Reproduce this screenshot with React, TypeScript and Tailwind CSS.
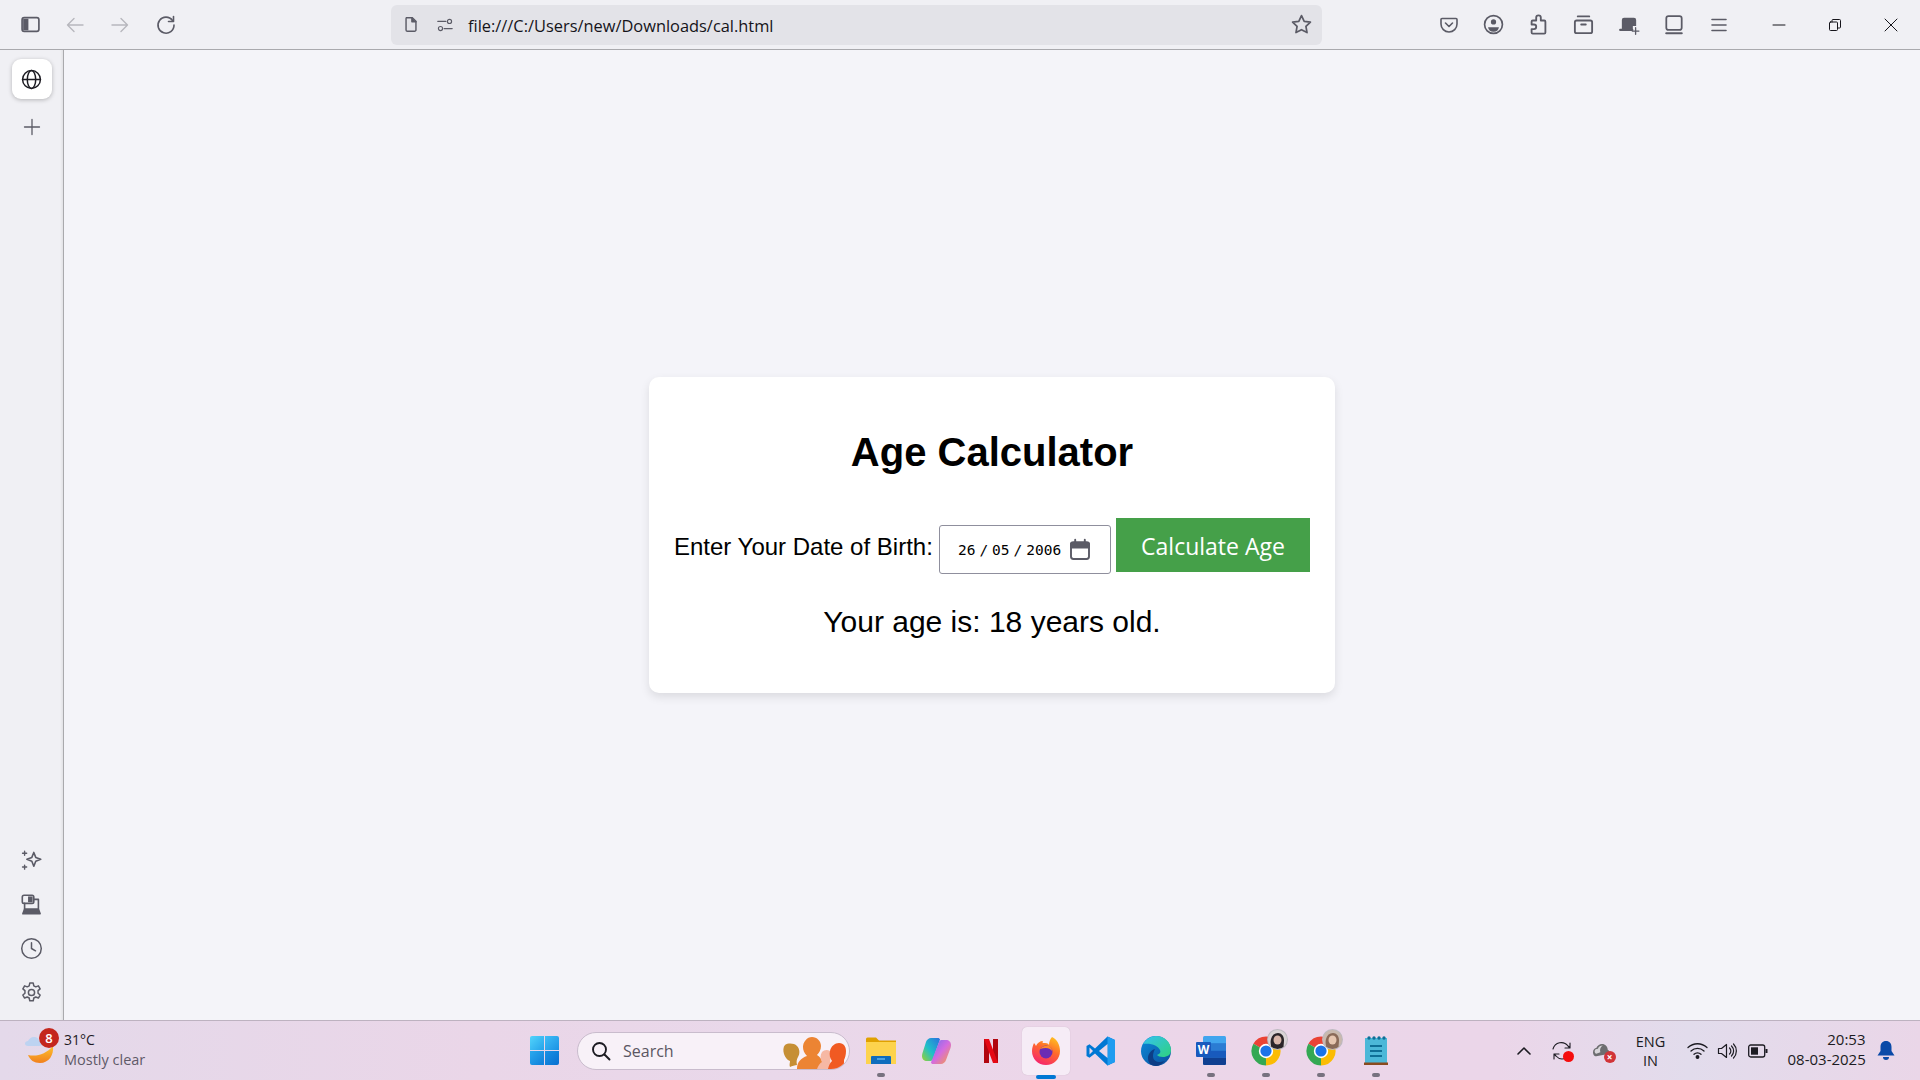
import type { ReactNode } from 'react';

const ink = '#5b5b66';

function Glyph({ size = 20, color = ink, width = 1.6, box = '0 0 20 20', children }: { size?: number; color?: string; width?: number; box?: string; children: ReactNode }) {
  return (
    <svg width={size} height={size} viewBox={box} fill="none" stroke={color} strokeWidth={width} strokeLinecap="round" strokeLinejoin="round">
      {children}
    </svg>
  );
}

function ToolCell({ children }: { children: ReactNode }) {
  return <div className="w-[45px] h-full flex items-center justify-center shrink-0">{children}</div>;
}

function Toolbar() {
  return (
    <div className="h-[50px] shrink-0 flex items-center pl-[8px] bg-[#f0f0f4] border-b border-[#a9a9ad]">
      {/* nav buttons */}
      <ToolCell>
        <Glyph size={21}>
          <rect x="2" y="3.500" width="16" height="13" rx="2" />
          <rect x="3" y="4.500" width="5" height="11" fill={ink} stroke="none" />
        </Glyph>
      </ToolCell>
      <ToolCell>
        <Glyph color="#b7b7bd" width={1.4} box="1 0 20 20">
          <path d="M18 10H2.500M9 3.500 2.500 10 9 16.500" />
        </Glyph>
      </ToolCell>
      <ToolCell>
        <Glyph color="#b7b7bd" width={1.4} box="1 0 20 20">
          <path d="M2 10h15.500M11 3.500l6.500 6.500-6.500 6.500" />
        </Glyph>
      </ToolCell>
      <ToolCell>
        <Glyph>
          <path d="M16.500 5.500A8 8 0 1 0 18 10" />
          <path d="M17.500 1.500v5h-5" />
        </Glyph>
      </ToolCell>

      {/* url bar */}
      <div className="ml-[203px] w-[931px] h-[40px] shrink-0 rounded-[6px] bg-[#e3e3e8] flex items-center">
        <div className="ml-[11px] w-[18px] flex justify-center">
          <Glyph size={21}>
            <path d="M5 2.500h6.500L15.500 6.500v9.500a1.500 1.500 0 0 1-1.500 1.500H6A1.500 1.500 0 0 1 4.500 16V3.500a1 1 0 0 1 .5-1z" />
            <path d="M11 2.500V7h4.500" fill={ink} />
          </Glyph>
        </div>
        <div className="ml-[16px] w-[18px] flex justify-center">
          <Glyph size={20} width={1.3}>
            <path d="M2 6h9M9 14h9" />
            <circle cx="15" cy="6" r="2.300" />
            <circle cx="5" cy="14" r="2.300" />
          </Glyph>
        </div>
        <span className="ml-[14px] mt-[4px] text-[16.400px] text-[#15141a] font-['Open_Sans','Noto_Sans',sans-serif] whitespace-nowrap">file:///C:/Users/new/Downloads/cal.html</span>
        <div className="ml-auto mr-[9px]">
          <Glyph size={23} width={1.5}>
            <path d="m10 2.300 2.350 4.900 5.400.75-3.900 3.750.95 5.350L10 14.500l-4.800 2.550.95-5.350-3.900-3.750 5.400-.75z" />
          </Glyph>
        </div>
      </div>

      {/* extension icons */}
      <div className="ml-[104px] flex h-full">
        <ToolCell>
          <Glyph size={20}>
            <path d="M3 3.500h14a1 1 0 0 1 1 1V9c0 4.500-3.500 8-8 8s-8-3.500-8-8V4.500a1 1 0 0 1 1-1z" />
            <path d="m6.500 8 3.500 3.500L13.500 8" />
          </Glyph>
        </ToolCell>
        <ToolCell>
          <Glyph size={21}>
            <circle cx="10" cy="10" r="8.500" />
            <circle cx="10" cy="7.500" r="2.500" fill={ink} stroke="none" />
            <path d="M4.800 12.500h10.400A5.500 5.500 0 0 1 10 17a5.500 5.500 0 0 1-5.200-4.500z" fill={ink} stroke="none" />
          </Glyph>
        </ToolCell>
        <ToolCell>
          <Glyph size={23}>
            <path d="M10 2a2 2 0 0 1 2 2v2.500h3a1 1 0 0 1 1 1V17a1 1 0 0 1-1 1H5a1 1 0 0 1-1-1v-3h2a2 2 0 0 0 0-4H4V7.500a1 1 0 0 1 1-1h3V4a2 2 0 0 1 2-2z" />
          </Glyph>
        </ToolCell>
        <ToolCell>
          <Glyph size={23}>
            <rect x="2.500" y="6.500" width="15" height="11" rx="1.500" />
            <path d="M5 3h10M8 10h4" />
          </Glyph>
        </ToolCell>
        <ToolCell>
          <Glyph size={22} width={1.2}>
            <path d="M3.500 15V5.500a2 2 0 0 1 2-2h9a2 2 0 0 1 2 2V11h-3v3H2.500z" fill={ink} stroke="none" />
            <path d="M2 14.500h11" stroke={ink} strokeWidth={2} />
            <path d="M16 12.500v6M13 15.500h6" />
          </Glyph>
        </ToolCell>
        <ToolCell>
          <Glyph size={22}>
            <rect x="3" y="2" width="14" height="12.500" rx="2" />
            <path d="M3 17.500h14" strokeWidth={2} />
          </Glyph>
        </ToolCell>
        <ToolCell>
          <Glyph size={20}>
            <path d="M3 4.500h14M3 10h14M3 15.500h14" />
          </Glyph>
        </ToolCell>
      </div>

      {/* window controls */}
      <div className="ml-[10px] flex h-full">
        <div className="w-[56px] flex items-center justify-center">
          <Glyph size={14} color="#15141a" width={1} box="0 0 14 14">
            <path d="M1 7h12" />
          </Glyph>
        </div>
        <div className="w-[56px] flex items-center justify-center">
          <Glyph size={14} color="#15141a" width={1} box="0 0 14 14">
            <rect x="1.500" y="4" width="8" height="8.500" rx="1" />
            <path d="M4 4V2.500a1 1 0 0 1 1-1h6.500a1 1 0 0 1 1 1V9a1 1 0 0 1-1 1H9.500" />
          </Glyph>
        </div>
        <div className="w-[56px] flex items-center justify-center">
          <Glyph size={14} color="#15141a" width={1} box="0 0 14 14">
            <path d="M1 1l12 12M13 1 1 13" />
          </Glyph>
        </div>
      </div>
    </div>
  );
}

function Sidebar() {
  return (
    <div className="w-[64px] shrink-0 flex flex-col items-center bg-[#f0f0f4] border-r border-[#a9a9ad] shadow-[inset_-3px_0_3px_-2px_rgba(0,0,0,0.08)]">
      <div className="mt-[9px] w-[40px] h-[40px] rounded-[9px] bg-white shadow-[0_1px_4px_rgba(0,0,0,0.25)] flex items-center justify-center">
        <Glyph size={21} color="#1c1b22" width={1.4}>
          <circle cx="10" cy="10" r="8.500" />
          <ellipse cx="10" cy="10" rx="4" ry="8.500" />
          <path d="M1.500 10h17" />
        </Glyph>
      </div>
      <div className="mt-[18px] h-[20px] flex items-center">
        <Glyph size={20} width={1.3}>
          <path d="M10 2.500v15M2.500 10h15" />
        </Glyph>
      </div>

      <div className="mt-auto mb-[16px] flex flex-col items-center gap-[21px]">
        <Glyph size={23} width={1.4}>
          <path d="m12 3 1.700 4.300L18 9l-4.300 1.700L12 15l-1.700-4.300L6 9l4.300-1.700z" />
          <path d="M4 2v3.500M2.200 3.700h3.600M4 14v3.500M2.200 15.700h3.600" strokeWidth={1.2} />
        </Glyph>
        <Glyph size={23} width={1.4}>
          <rect x="2" y="2" width="10" height="7" rx="1.500" />
          <rect x="7" y="3" width="4" height="5" fill={ink} stroke="none" />
          <path d="M12 5.500h4v8M4 9v5" />
          <path d="M2.500 18h15l-1.500-4H4z" fill={ink} />
        </Glyph>
        <Glyph size={23} width={1.3}>
          <circle cx="10" cy="10" r="8.500" />
          <path d="M10 5v5l3.500 2" />
        </Glyph>
        <Glyph size={23} width={1.3}>
          <circle cx="10" cy="10" r="2.700" />
          <path d="M8.500 1.800h3l.5 2.400 1.700.9 2.300-.9 1.500 2.600-1.800 1.600v2.200l1.800 1.600-1.500 2.600-2.300-.9-1.700.9-.5 2.400h-3l-.5-2.400-1.700-.9-2.300.9-1.500-2.600 1.800-1.600V8.400L2.500 6.800 4 4.200l2.300.9 1.700-.9z" />
        </Glyph>
      </div>
    </div>
  );
}

function AgeCard() {
  return (
    <div className="w-[686px] h-[316px] rounded-[10px] bg-white shadow-[0_4px_10px_rgba(0,0,0,0.1)] px-[25px] pt-[52px] font-['Liberation_Sans',Arial,sans-serif] text-black">
      <h1 className="text-[40px] leading-[46px] font-bold text-center">Age Calculator</h1>
      <div className="mt-[43px] flex items-start justify-between">
        <label className="mt-[15px] text-[24px] leading-[28px] whitespace-nowrap">Enter Your Date of Birth:</label>
        <div className="mt-[7px] ml-[6px] w-[172px] h-[49px] rounded-[3px] border border-[#8f8f9d] flex items-center pl-[18px] font-['DejaVu_Sans_Mono',monospace] text-[14.500px]">
          <span className="mt-[2px] flex">
            <span>26</span>
            <span className="mx-[4px]">/</span>
            <span>05</span>
            <span className="mx-[4px]">/</span>
            <span>2006</span>
          </span>
          <span className="ml-[7px]">
            <Glyph size={24} width={1.6}>
              <rect x="2.500" y="3.500" width="15" height="14" rx="2" />
              <path d="M2.500 4.500h15V8h-15z" fill={ink} />
              <path d="M6 1.500v3M14 1.500v3" />
            </Glyph>
          </span>
        </div>
        <button className="ml-[5px] w-[194px] h-[54px] pt-[2px] bg-[#45a049] text-white text-[23px] font-['Open_Sans','Noto_Sans',sans-serif]">Calculate Age</button>
      </div>
      <p className="mt-[31px] text-[30px] leading-[34px] text-center">Your age is: 18 years old.</p>
    </div>
  );
}

function Pin({ active = false }: { active?: boolean }) {
  return active
    ? <span className="absolute bottom-[2px] left-1/2 -translate-x-1/2 w-[20px] h-[4px] rounded-full bg-[#0078d4]" />
    : <span className="absolute bottom-[4px] left-1/2 -translate-x-1/2 w-[8px] h-[4px] rounded-full bg-[#77717f]" />;
}

function AppIcon({ children, pin = false, active = false }: { children: ReactNode; pin?: boolean; active?: boolean }) {
  return (
    <div className="relative w-[55px] h-[60px] flex items-center justify-center shrink-0">
      {active && <span className="absolute top-[6px] left-[3.500px] w-[48px] h-[48px] rounded-[5px] bg-[#f6ecf6] shadow-[0_0_1px_rgba(0,0,0,0.2)]" />}
      <span className="relative flex">{children}</span>
      {(pin || active) && <Pin active={active} />}
    </div>
  );
}

function Chrome({ id, hair, skin, bg }: { id: string; hair: string; skin: string; bg: string }) {
  return (
    <span className="relative flex">
      <svg width="30" height="30" viewBox="0 0 30 30">
        <path d="M15 15 27.560 7.750A14.500 14.500 0 0 0 2.440 7.750z" fill="#ea4335" />
        <path d="M15 15 2.440 7.750A14.500 14.500 0 0 0 15 29.500z" fill="#34a853" />
        <path d="M15 15V29.500A14.500 14.500 0 0 0 27.560 7.750z" fill="#fbbc04" />
        <circle cx="15" cy="15" r="7.200" fill="#fff" />
        <circle cx="15" cy="15" r="5.600" fill="#1a73e8" />
      </svg>
      <svg className="absolute top-[-7px] left-[16px]" width="21" height="21" viewBox="0 0 21 21">
        <clipPath id={id}><circle cx="10.500" cy="10.500" r="9.500" /></clipPath>
        <circle cx="10.500" cy="10.500" r="10.500" fill="#bdb9c0" />
        <g clipPath={`url(#${id})`}>
          <rect width="21" height="21" fill={bg} />
          <path d="M5 21c-1-4-2-7-1-11 1-4 3.500-6 7-6s6 3 6 7-1 7 0 10z" fill={hair} />
          <ellipse cx="10.500" cy="11" rx="4" ry="4.500" fill={skin} />
        </g>
      </svg>
    </span>
  );
}

function People() {
  return (
    <svg width="64" height="32" viewBox="0 0 64 32">
      <path d="M3 8c3-2 9-2 12 1 3 3 3 8 1 11-1 2-2 4-1 8-2 0-5 1-7 2-1-2 0-4 0-6-3-1-5-4-6-7-1-3-1-7 1-9z" fill="#c68f35" />
      <path d="M15 32c0-7 4-11 10-13-3-3-4-6-4-9 0-5 4-10 9-10s9 4 9 9c0 4-2 7-4 9 3 2 5 4 5 7l1 7z" fill="#ec8433" />
      <path d="M35 32c1-3 3-6 5-7-2-3-2-7 0-10 2-2 5-3 8-1 2 2-1 10 1 18z" fill="#f6b8a4" />
      <path d="M46 32c1-4 2-6 4-8-2-3-3-6-2-10 1-5 5-8 9-8 5 0 7 4 7 8 0 4-1 7-2 9 0 3 0 6-1 9z" fill="#f15a22" />
    </svg>
  );
}

function Taskbar() {
  return (
    <div className="h-[60px] shrink-0 flex items-center border-t border-[#bdb2c0] bg-[linear-gradient(90deg,#e4d9ea_0%,#ead6e8_25%,#e9d8ea_40%,#ecd6e9_55%,#ebd6e9_78%,#e2dcec_88%,#ead6e8_100%)] font-['Open_Sans','Noto_Sans',sans-serif]">
      {/* weather */}
      <div className="relative ml-[25px] w-[30px] h-[60px] shrink-0">
        <svg className="absolute top-[13px] left-0" width="30" height="30" viewBox="0 0 30 30">
          <defs>
            <linearGradient id="moon" x1="0" y1="0" x2="0" y2="1">
              <stop offset="0" stopColor="#fdc22f" />
              <stop offset="1" stopColor="#f1801d" />
            </linearGradient>
          </defs>
          <path d="M28 12c1 9-4 17-13 17-6 0-10-3-12-8 9 2 18-1 25-9z" fill="url(#moon)" />
          <path d="M3 12c-2 0-3-1-3-2.500S1.500 7 3 7c1-2 3-4 6-4 3 0 5 2 5 4 2 0 4 1 4 2.500S16 12 14 12z" fill="#bdd3f1" />
        </svg>
        <span className="absolute top-[7px] left-[14px] w-[20px] h-[20px] rounded-full bg-[#c4261d] text-white text-[13px] leading-[20px] text-center font-semibold">8</span>
      </div>
      <div className="ml-[9px] -mt-[2px] w-[100px] shrink-0">
        <div className="text-[14px] leading-[20px] text-[#1f1b24]">31°C</div>
        <div className="text-[14.500px] leading-[20px] text-[#5f5a68] whitespace-nowrap">Mostly clear</div>
      </div>

      {/* start + search */}
      <div className="ml-[366px] grid grid-cols-2 gap-[1px] w-[29px] h-[29px] shrink-0">
        <span className="rounded-tl-[2px] bg-gradient-to-br from-[#52d4fb] to-[#24a3ea]" />
        <span className="rounded-tr-[2px] bg-gradient-to-br from-[#3fbdf6] to-[#1a92e4]" />
        <span className="rounded-bl-[2px] bg-gradient-to-br from-[#2baaee] to-[#0f7ed9]" />
        <span className="rounded-br-[2px] bg-gradient-to-br from-[#1a92e4] to-[#0a6fd0]" />
      </div>
      <div className="relative ml-[18px] w-[273px] h-[38px] shrink-0 rounded-full bg-[#f8f1f8] border border-[#c9bccd] flex items-center overflow-hidden">
        <span className="ml-[13px] flex">
          <Glyph size={20} color="#1c1b22" width={1.9}>
            <circle cx="8.500" cy="8.500" r="6.500" />
            <path d="m13.500 13.500 5 5" />
          </Glyph>
        </span>
        <span className="ml-[12px] text-[16px] text-[#5b5662]">Search</span>
        <span className="absolute right-[3px] bottom-0 flex"><People /></span>
      </div>

      {/* pinned apps */}
      <div className="ml-[3.500px] flex">
        <AppIcon pin>
          <svg width="30" height="27" viewBox="0 0 30 27">
            <path d="M0 2a1.500 1.500 0 0 1 1.500-1.500H10l3 3h17V8H0z" fill="#e0a100" />
            <path d="M0 5h30v22H0z" fill="#fdd34d" />
            <path d="M6 19h18a1 1 0 0 1 1 1v7H5v-7a1 1 0 0 1 1-1z" fill="#0f6cbd" />
            <path d="M11 22h8" stroke="#60b4ee" strokeWidth={1.500} />
          </svg>
        </AppIcon>
        <AppIcon>
          <svg width="29" height="27" viewBox="0 0 29 27">
            <defs>
              <linearGradient id="cop1" x1="0" y1="1" x2="1" y2="0">
                <stop offset="0" stopColor="#9bd12f" />
                <stop offset="0.45" stopColor="#1fc0c9" />
                <stop offset="1" stopColor="#2a6fe0" />
              </linearGradient>
              <linearGradient id="cop2" x1="0" y1="0" x2="1" y2="1">
                <stop offset="0" stopColor="#6f6ff0" />
                <stop offset="0.5" stopColor="#d46be0" />
                <stop offset="1" stopColor="#f8a13c" />
              </linearGradient>
            </defs>
            <path d="M9 1h7c1 0 1.500.5 2 1.500L11 22c-.5 1.500-1.500 2-3 2H5c-3 0-5-2-5-5 0-1 .2-2 .5-3L4 5c.5-2 3-4 5-4z" fill="url(#cop1)" />
            <path d="M19 27h-8c-1 0-1.500-.5-2-1.500L17 5c.5-1.500 1.500-2 3-2h4c3 0 5 2 5 5 0 1-.2 2-.5 3L24 23c-.5 2-3 4-5 4z" fill="url(#cop2)" />
          </svg>
        </AppIcon>
        <AppIcon>
          <svg width="14" height="24" viewBox="0 0 14 24">
            <path d="M0 0h5v24l-5 0z" fill="#b1060f" />
            <path d="M9 0h5v24H9z" fill="#b1060f" />
            <path d="M0 0h5l9 24H9z" fill="#e50914" />
          </svg>
        </AppIcon>
        <AppIcon active>
          <svg width="28" height="28" viewBox="0 0 28 28">
            <defs>
              <linearGradient id="ffx" x1="0.800" y1="0" x2="0.300" y2="1">
                <stop offset="0" stopColor="#ffc21f" />
                <stop offset="0.45" stopColor="#ff6a2b" />
                <stop offset="1" stopColor="#f5246e" />
              </linearGradient>
            </defs>
            <path d="M14 28C6 28 0 22 0 14 0 11 1 8 2 6c1 1 1.500 2 2 3 1-3 4-5 7-5 0 0-1 2 0 2 3 0 5 0 6 2 0-3 1-6 3-8 5 2 8 8 8 14 0 8-6 14-14 14z" fill="url(#ffx)" />
            <circle cx="14" cy="15" r="6.500" fill="#6a2cb3" />
            <path d="M8 12c2-3 6-4 9-3 2 1 3 3 3 5-2-3-6-4-12-2z" fill="#ff8a2b" />
          </svg>
        </AppIcon>
        <AppIcon>
          <svg width="30" height="30" viewBox="0 0 30 30">
            <path d="M21.500 0.500 29 4v22l-7.500 3.500L9 17.500l-5.500 4.200L.5 20v-10l3-1.700L9 12.500z" fill="#0078d4" />
            <path d="M21.500 0.500 29 4v22l-7.500 3.500z" fill="#1f9cf0" />
            <path d="M21.500 8 13 15l8.500 7z" fill="#e9d8ea" />
            <path d="M3.500 11.500 7 15l-3.500 3.500z" fill="#e9d8ea" />
          </svg>
        </AppIcon>
        <AppIcon>
          <svg width="30" height="30" viewBox="0 0 30 30">
            <defs>
              <linearGradient id="edge1" x1="0" y1="0" x2="1" y2="1">
                <stop offset="0" stopColor="#0c8ad8" />
                <stop offset="1" stopColor="#0b4f9e" />
              </linearGradient>
              <linearGradient id="edge2" x1="0" y1="0" x2="1" y2="1">
                <stop offset="0" stopColor="#35c1f1" />
                <stop offset="1" stopColor="#2fd27d" />
              </linearGradient>
            </defs>
            <circle cx="15" cy="15" r="15" fill="url(#edge1)" />
            <path d="M2 8C5 3 10 0 15 0c8 0 15 6 15 14 0 5-4 7-8 7-3 0-5-1-6-2 3-1 4-3 3-5-2-4-8-7-17-6z" fill="url(#edge2)" />
            <path d="M12 20c0 4 3 6 7 6 2 0 4-1 5-1-3 3-6 5-9 5-6 0-8-4-8-8 0-4 3-8 7-9-1 2-2 4-2 7z" fill="#0d3e86" />
          </svg>
        </AppIcon>
        <AppIcon pin>
          <svg width="30" height="29" viewBox="0 0 30 29">
            <rect x="7" y="0" width="23" height="29" rx="1.500" fill="#41a5ee" />
            <rect x="7" y="7.200" width="23" height="7.300" fill="#2b7cd3" />
            <rect x="7" y="14.500" width="23" height="7.300" fill="#185abd" />
            <path d="M7 21.800h23v5.700a1.500 1.500 0 0 1-1.500 1.500h-20A1.500 1.500 0 0 1 7 27.500z" fill="#103f91" />
            <rect x="0" y="6" width="15" height="15" rx="1" fill="#185abd" />
            <text x="7.500" y="17.500" textAnchor="middle" fontSize="12" fontWeight="700" fill="#fff" fontFamily="Open Sans, sans-serif">W</text>
          </svg>
        </AppIcon>
        <AppIcon pin><Chrome id="av1" hair="#2b2529" skin="#d8b6aa" bg="#d9d3d5" /></AppIcon>
        <AppIcon pin><Chrome id="av2" hair="#8a6a58" skin="#e6c6b0" bg="#c9b9ae" /></AppIcon>
        <AppIcon pin>
          <svg width="24" height="29" viewBox="0 0 24 29">
            <rect x="1" y="2" width="22" height="25" fill="#4cb8d8" />
            <path d="M0 26.500h24V29H0z" fill="#8a4b1f" />
            <path d="M6 10h12M6 15h12M6 20h12" stroke="#0f6f96" strokeWidth={1.800} />
            <circle cx="5" cy="2" r="1.700" fill="#0f6f96" />
            <circle cx="10" cy="2" r="1.700" fill="#0f6f96" />
            <circle cx="15" cy="2" r="1.700" fill="#0f6f96" />
            <circle cx="20" cy="2" r="1.700" fill="#0f6f96" />
          </svg>
        </AppIcon>
      </div>

      {/* tray */}
      <div className="ml-[112px] flex items-center shrink-0 text-[#1c1b22]">
        <Glyph size={16} color="#1c1b22" width={1.600} box="0 0 16 16">
          <path d="m2 11 6-6 6 6" />
        </Glyph>
        <span className="relative ml-[19px] flex">
          <Glyph size={22} color="#1c1b22" width={1.100} box="0 0 22 22">
            <path d="M2 9a8.500 8.500 0 0 1 15-3l2 2M19 3v5h-5" />
            <path d="M15 18a8.500 8.500 0 0 1-10-2l-2-2M3 19v-5h5" />
          </Glyph>
          <span className="absolute right-[-1px] bottom-[0px] w-[11px] h-[11px] rounded-full bg-[#f50d0d]" />
        </span>
        <span className="relative ml-[20px] flex">
          <svg width="18" height="15" viewBox="0 0 22 18">
            <path d="M4 16C1 16 0 13 0 11c0-3 2-5 4-5 1-3 4-5 7-5 4 0 7 3 7 7 2 1 3 3 2 5z" fill="#6d6d70" />
            <path d="M4 13c-1 0-2-1-2-3 0-2 2-3 4-3 1-3 3-4 6-4-3 2-4 5-3 8z" fill="#d8d6da" />
          </svg>
          <span className="absolute right-[-5px] bottom-[-5px] w-[12px] h-[12px] rounded-full bg-[#d13438] text-white text-[10px] leading-[12px] text-center font-bold">×</span>
        </span>
        <div className="ml-[20px] w-[40px] text-center text-[14.500px] leading-[19px]">
          <div>ENG</div>
          <div>IN</div>
        </div>
        <span className="ml-[16px] flex">
          <Glyph size={21} color="#1c1b22" width={1.300} box="0 0 21 21">
            <path d="M1 7.500c5.500-5 13.500-5 19 0M4 11c3.800-3.500 9.200-3.500 13 0M7 14.300c2-1.800 5-1.800 7 0" />
            <circle cx="10.500" cy="17" r="1.300" fill="#1c1b22" />
          </Glyph>
        </span>
        <span className="ml-[9px] flex">
          <Glyph size={20} color="#1c1b22" width={1.200}>
            <path d="M1.500 7.500h3L9.500 3.500v13l-5-4h-3z" />
            <path d="M12.500 7a4 4 0 0 1 0 6M14.500 5a7 7 0 0 1 0 10M16.500 3a10 10 0 0 1 0 14" />
          </Glyph>
        </span>
        <span className="ml-[11px] flex">
          <svg width="20" height="14" viewBox="0 0 20 14" fill="none">
            <rect x="0.700" y="1" width="16" height="12" rx="2" stroke="#1c1b22" strokeWidth={1.300} />
            <rect x="3" y="3.300" width="7" height="7.400" fill="#1c1b22" />
            <rect x="17.500" y="5" width="2" height="4" fill="#1c1b22" />
          </svg>
        </span>
        <div className="ml-[20px] -mt-[3px] w-[78px] text-right text-[15px] leading-[20px] whitespace-nowrap">
          <div>20:53</div>
          <div>08-03-2025</div>
        </div>
        <span className="ml-[11px] flex">
          <svg width="18" height="20" viewBox="0 0 18 20">
            <path d="M9 0c3.500 0 5.500 2.500 5.500 6v4l3 4.500H.5l3-4.500V6C3.500 2.500 5.500 0 9 0z" fill="#0a4aa8" />
            <path d="M6 16h6a3 3 0 0 1-6 0z" fill="#0a4aa8" />
          </svg>
        </span>
      </div>
    </div>
  );
}

export default function App() {
  return (
    <div className="w-screen h-screen flex flex-col overflow-hidden bg-[#f4f4f9]">
      <Toolbar />
      <div className="flex-1 flex min-h-0">
        <Sidebar />
        <main className="flex-1 flex items-center justify-center bg-[#f4f4f9]">
          <AgeCard />
        </main>
      </div>
      <Taskbar />
    </div>
  );
}
